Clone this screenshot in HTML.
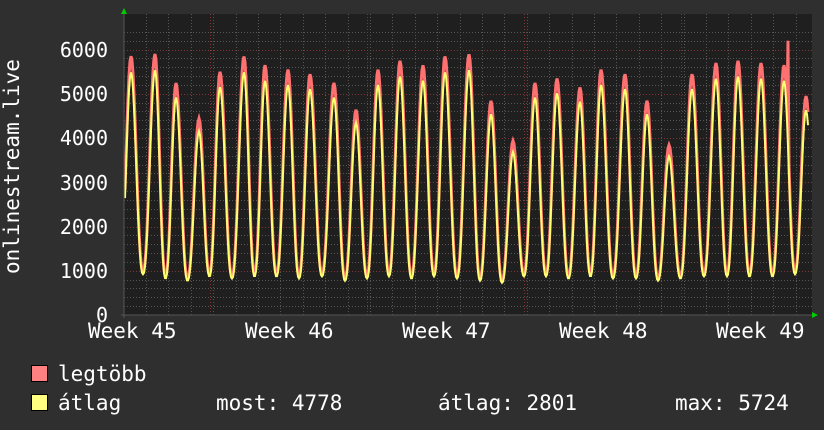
<!DOCTYPE html>
<html><head><meta charset="utf-8"><style>
html,body{margin:0;padding:0;background:#2f2f2f;}
svg{display:block}
text{font-family:"DejaVu Sans Mono","Liberation Mono",monospace;fill:#fff}
</style></head><body>
<svg id="g" width="824" height="430" viewBox="0 0 824 430" xmlns="http://www.w3.org/2000/svg">
<rect width="824" height="430" fill="#2f2f2f"/>
<rect x="124" y="14" width="688" height="301" fill="#1f1f1f"/>
<g id="grid"></g>
<g id="data"></g>
<line x1="124" y1="12" x2="124" y2="318" stroke="#555" stroke-width="1"/>
<line x1="121" y1="315" x2="814" y2="315" stroke="#555" stroke-width="1"/>
<polygon points="121,14 127,14 124,8" fill="#00cc00"/>
<polygon points="812,312 812,318 818,315" fill="#00cc00"/>
<g font-size="20" text-anchor="end">
<text x="108" y="57">6000</text><text x="108" y="101">5000</text><text x="108" y="145">4000</text>
<text x="108" y="190">3000</text><text x="108" y="234">2000</text><text x="108" y="278">1000</text><text x="108" y="322">0</text>
</g>
<text font-size="21" transform="translate(19,274) rotate(-90)">onlinestream.live</text>
<g font-size="21">
<text x="88" y="338">Week 45</text><text x="245" y="338">Week 46</text><text x="402" y="338">Week 47</text>
<text x="559" y="338">Week 48</text><text x="716" y="338">Week 49</text>
<rect x="31.5" y="365.5" width="16" height="16" fill="#ff8080" stroke="#000"/>
<rect x="31.5" y="394.5" width="16" height="16" fill="#ffff80" stroke="#000"/>
<text x="58" y="381">legtöbb</text>
<text x="58" y="410">átlag</text>
<text x="216" y="410">most: 4778</text>
<text x="438" y="410">átlag: 2801</text>
<text x="675" y="410">max: 5724</text>
</g>
</svg>
<script>
var ns="http://www.w3.org/2000/svg";
function el(p,t,a){var e=document.createElementNS(ns,t);for(var k in a)e.setAttribute(k,a[k]);p.appendChild(e);return e;}
var g=document.getElementById('grid');
for(var v=200;v<=6400;v+=200){var y=Math.round(315-v*0.04425)+0.5;if(y<14)break;var maj=v%1000==0;
el(g,'line',{x1:124,x2:812,y1:y,y2:y,stroke:maj?'#803434':'#555','stroke-dasharray':'1,2'});}
for(var x=146;x<812;x+=22.4){var xx=Math.round(x)+0.5;el(g,'line',{x1:xx,x2:xx,y1:14,y2:315,stroke:'#555','stroke-dasharray':'1,2'});}
[210,367,524,681].forEach(function(x){el(g,'line',{x1:x+0.5,x2:x+0.5,y1:14,y2:315,stroke:'#803434','stroke-dasharray':'1,2'});});
var pk=[131,155,176,199,220,244,265,288,310,334,356,378,400,423,445,469,491,513,535,557,580,601,625,647,669,692,716,738,761,784,806];
var hv=[5800,5850,5200,4400,5450,5800,5600,5500,5400,5200,4600,5500,5700,5600,5800,5850,4800,3900,5200,5300,5100,5500,5400,4800,3800,5400,5650,5700,5650,5600,4900];
var mins=[1000,950,850,800,900,850,900,900,850,900,800,850,900,850,900,850,800,750,900,900,850,900,850,850,800,850,900,900,900,900,950,950];
function val(x,avg){var i=0;while(i<pk.length-1&&x>pk[i+1])i++;
var a=pk[i],b=pk[i+1]||pk[i]+22.4,ha=hv[i],hb=hv[i+1]||hv[i];
if(x<pk[0]){b=pk[0];a=b-22.4;ha=hv[0];hb=hv[0];}
var t=(x-a)/(b-a);var m=mins[i+1]||900;var k=avg?0.95:1;
var c,h;if(t<0.5){c=(1+Math.cos(2*Math.PI*t))/2;h=ha;}else{c=(1+Math.cos(2*Math.PI*t))/2;h=hb;}
c=Math.pow(c,1.2);return m*(avg?0.97:1.05)+(h*k-m)*c;}
function path(avg){var s='';for(var x=125;x<=808;x+=1){var v=val(x,avg);if(!avg&&x==788)v=6200;var y=315-v*0.04425;s+=(s?'L':'M')+x+','+y.toFixed(1);}return s;}
var d=document.getElementById('data');
el(d,'path',{d:path(false),fill:'none',stroke:'#ff7070','stroke-width':3});
el(d,'path',{d:path(true),fill:'none',stroke:'#ffff70','stroke-width':2});
</script>
</body></html>
